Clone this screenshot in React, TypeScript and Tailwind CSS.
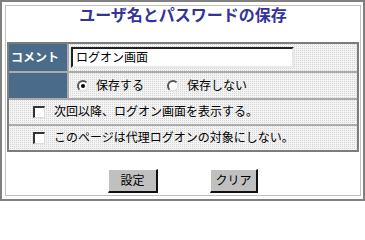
const jp = "font-['Liberation_Sans','Noto_Sans_CJK_JP',sans-serif]";
const dots = 'bg-[#f1f1f1] bg-[conic-gradient(#d6d6d6_25%,#f3f3f3_0)] bg-[length:2px_2px]';

function Radio({ checked }: { checked?: boolean }) {
  return (
    <span className="flex h-[12px] w-[12px] shrink-0 items-center justify-center rounded-full border-2 border-t-[#555] border-l-[#555] border-r-[#e4e4e4] border-b-[#e4e4e4] bg-white">
      {checked && <span className="h-[4px] w-[4px] rounded-full bg-black" />}
    </span>
  );
}

function Check() {
  return (
    <span className="block h-[12px] w-[12px] shrink-0 border-t-2 border-l-2 border-r border-b border-t-[#333] border-l-[#333] border-r-[#dcdcdc] border-b-[#dcdcdc] bg-white" />
  );
}

function Btn({ label, w }: { label: string; w: string }) {
  return (
    <button
      className={`${w} h-[24px] border-t border-l border-r-2 border-b-2 border-t-white border-l-white border-r-[#111] border-b-[#111] bg-[#c0c0c0] text-[12px] leading-none text-black`}
    >
      {label}
    </button>
  );
}

export default function App() {
  return (
    <div className={`${jp} h-[201px] w-[365px] border-2 border-[#808080] bg-white pt-[3px] pl-[3px] pr-[2px] pb-[3px]`}>
      <div className="flex h-full flex-col border border-[#c0c0c0] px-[1px]">
        <h1 className="mt-[1px] h-[17px] text-center text-[16px] font-bold leading-[17px] text-[#333399]">
          ユーザ名とパスワードの保存
        </h1>

        <div className="mt-[18px] grid grid-cols-[58px_1fr] gap-[2px] border-2 border-[#7c7c7c] bg-[#ababab] text-[12px] text-black">
          <div className="flex h-[27px] items-center bg-[#4a6b8a] pl-[2px] font-bold text-white">コメント</div>
          <div className={`${dots} flex h-[27px] items-center pl-[2px]`}>
            <div className="flex h-[21px] w-[223px] items-center border-2 border-t-[#222] border-l-[#222] border-r-[#e8e8e8] border-b-[#e8e8e8] bg-white pl-[3px]">
              ログオン画面
            </div>
          </div>

          <div className="h-[25px] bg-[#4a6b8a]" />
          <div className={`${dots} flex h-[25px] items-center pl-[8px]`}>
            <Radio checked />
            <span className="ml-[7px]">保存する</span>
            <span className="ml-[23px]">
              <Radio />
            </span>
            <span className="ml-[8px]">保存しない</span>
          </div>

          <div className={`${dots} col-span-2 flex h-[24px] items-center pl-[24px]`}>
            <Check />
            <span className="ml-[9px]">次回以降、ログオン画面を表示する。</span>
          </div>

          <div className={`${dots} col-span-2 flex h-[24px] items-center pl-[24px]`}>
            <Check />
            <span className="ml-[9px]">このページは代理ログオンの対象にしない。</span>
          </div>
        </div>

        <div className="mt-[17px] flex justify-center gap-[52px]">
          <Btn label="設定" w="w-[50px]" />
          <Btn label="クリア" w="w-[48px]" />
        </div>
      </div>
    </div>
  );
}
